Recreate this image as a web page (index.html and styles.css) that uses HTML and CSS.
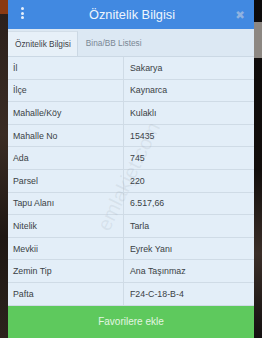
FILE: index.html
```html
<!DOCTYPE html>
<html lang="tr">
<head>
<meta charset="utf-8">
<link rel="stylesheet" href="styles.css">
</head>
<body>
<div class="stage">
  <div class="side side-left"><div class="orange"></div></div>
  <div class="modal">
    <div class="header">
      <span class="dots"><i></i><i></i><i></i></span>
      <span class="title">Öznitelik Bilgisi</span>
      <span class="close">✖</span>
    </div>
    <div class="tabs">
      <div class="tab active">Öznitelik Bilgisi</div>
      <div class="tab">Bina/BB Listesi</div>
    </div>
    <div class="table">
      <div class="row"><div class="k">İl</div><div class="v">Sakarya</div></div>
      <div class="row"><div class="k">İlçe</div><div class="v">Kaynarca</div></div>
      <div class="row"><div class="k">Mahalle/Köy</div><div class="v">Kulaklı</div></div>
      <div class="row"><div class="k">Mahalle No</div><div class="v">15435</div></div>
      <div class="row"><div class="k">Ada</div><div class="v">745</div></div>
      <div class="row"><div class="k">Parsel</div><div class="v">220</div></div>
      <div class="row"><div class="k">Tapu Alanı</div><div class="v">6.517,66</div></div>
      <div class="row"><div class="k">Nitelik</div><div class="v">Tarla</div></div>
      <div class="row"><div class="k">Mevkii</div><div class="v">Eyrek Yanı</div></div>
      <div class="row"><div class="k">Zemin Tip</div><div class="v">Ana Taşınmaz</div></div>
      <div class="row"><div class="k">Pafta</div><div class="v">F24-C-18-B-4</div></div>
      <div class="watermark">emlakjet.com</div>
    </div>
    <div class="fav">Favorilere ekle</div>
  </div>
  <div class="side side-right"><div class="grey"></div></div>
</div>
</body>
</html>
```
FILE: styles.css
```css
html, body {
  margin: 0;
  padding: 0;
  background: #141010;
}
body {
  font-family: "Liberation Sans", Arial, sans-serif;
  width: 262px;
  height: 338px;
  overflow: hidden;
}
.stage {
  display: flex;
  height: 338px;
}
.side {
  width: 8px;
  flex: none;
  background: linear-gradient(180deg, #2a1f1a 0%, #3a2c24 40%, #1e1714 70%, #2c221c 100%);
}
.side-left .orange {
  height: 14px;
  background: #8a3a12;
}
.side-right {
  background: linear-gradient(180deg, #0c0a0a 0%, #120e0c 50%, #3a2e28 75%, #141010 100%);
}
.side-right .grey {
  margin-top: 22px;
  height: 36px;
  background: #8c8782;
}
.modal {
  width: 246px;
  flex: none;
  display: flex;
  flex-direction: column;
  background: #e3eef8;
}
.header {
  height: 29px;
  background: #4189e1;
  display: flex;
  align-items: center;
  position: relative;
  justify-content: center;
}
.dots {
  position: absolute;
  left: 13px;
  top: 7px;
  display: flex;
  flex-direction: column;
  gap: 1.5px;
}
.dots i {
  display: block;
  width: 3px;
  height: 3px;
  border-radius: 50%;
  background: #e6f0fb;
}
.title {
  color: #eef5fd;
  font-size: 12.8px;
  padding-left: 2px;
}
.close {
  position: absolute;
  right: 9px;
  top: 8px;
  color: #8fb2e0;
  font-size: 11.5px;
  font-family: "DejaVu Sans", sans-serif;
}
.tabs {
  height: 28px;
  display: flex;
  background: #dce8f3;
  border-bottom: 1px solid #cbd8e4;
  box-sizing: border-box;
}
.tab {
  font-size: 8.3px;
  color: #7a8793;
  display: flex;
  align-items: center;
  padding: 1px 8px 0 8px;
  white-space: nowrap;
}
.tab.active {
  background: #e7f0f8;
  color: #3e4348;
  border-right: 1px solid #cbd8e4;
  border-top: 1px solid #d3dee8;
  padding: 0 6px 0 7px;
  margin-top: 2px;
}
.table {
  position: relative;
  flex: none;
  overflow: hidden;
}
.row {
  display: flex;
  height: 22.6px;
  border-bottom: 1px solid #cfdbe6;
  box-sizing: border-box;
  font-size: 8.8px;
  color: #3a3f45;
}
.k {
  width: 116px;
  box-sizing: border-box;
  padding-left: 5px;
  border-right: 1px solid #cfdbe6;
  display: flex;
  align-items: center;
}
.v {
  flex: 1;
  padding-left: 6px;
  display: flex;
  align-items: center;
}
.watermark {
  position: absolute;
  left: 62px;
  top: 108px;
  font-size: 20px;
  color: rgba(150, 160, 170, 0.16);
  transform: rotate(-64deg);
  white-space: nowrap;
  pointer-events: none;
}
.fav {
  flex: 1;
  background: #5ec95d;
  color: #e4f6e2;
  font-size: 10px;
  display: flex;
  align-items: center;
  justify-content: center;
  padding-bottom: 1px;
}
```
